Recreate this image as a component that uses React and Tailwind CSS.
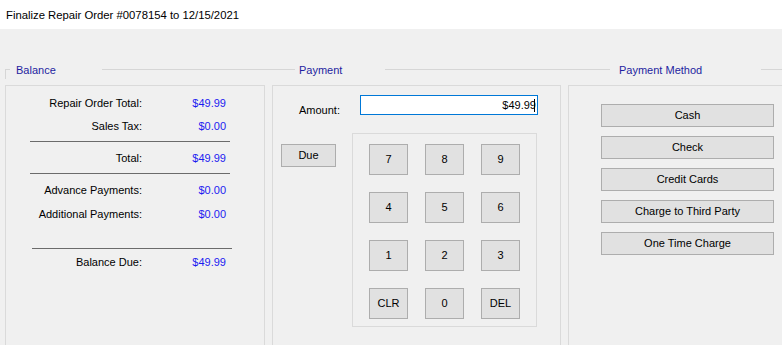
import React from "react";

const balanceRows = [
  { label: "Repair Order Total:", value: "$49.99" },
  { label: "Sales Tax:", value: "$0.00" },
];

const keys = ["7", "8", "9", "4", "5", "6", "1", "2", "3", "CLR", "0", "DEL"];

const methods = ["Cash", "Check", "Credit Cards", "Charge to Third Party", "One Time Charge"];

function Row({ label, value, className = "" }) {
  return (
    <div className={`flex leading-[16px] ${className}`}>
      <div className="w-[136px] text-right">{label}</div>
      <div className="w-[84px] text-right text-[#1c1cf0]">{value}</div>
    </div>
  );
}

function WinButton({ children, className = "" }) {
  return (
    <button
      className={`flex items-center justify-center bg-[#e1e1e1] border border-[#adadad] text-[11px] text-black leading-none ${className}`}
    >
      {children}
    </button>
  );
}

export default function App() {
  return (
    <div className="w-[782px] h-[345px] overflow-hidden bg-[#f0f0f0] text-[11px] text-black font-['Liberation_Sans',Arial,sans-serif]">
      {/* Title */}
      <div className="h-[29px] bg-white pl-[6px] pt-[8px] text-[11.3px] leading-[14px]">
        Finalize Repair Order #0078154 to 12/15/2021
      </div>

      {/* Group headers */}
      <div className="mt-[33px] h-[23px] flex items-start">
        <div className="ml-[5px] mt-[7px] w-[5px] h-[10px] border-l border-t border-[#d6d6d6]" />
        <div className="ml-[6px] w-[86px] mt-[1px] leading-[14px] text-[#1e1ea0]">Balance</div>
        <div className="w-[193px] mt-[7px] h-px bg-[#d6d6d6]" />
        <div className="ml-[4px] w-[86px] mt-[1px] leading-[14px] text-[#1e1ea0]">Payment</div>
        <div className="w-[225px] mt-[7px] h-px bg-[#d6d6d6]" />
        <div className="ml-[9px] w-[142px] mt-[1px] leading-[14px] text-[#1e1ea0]">Payment Method</div>
        <div className="flex-1 mt-[7px] h-px bg-[#d6d6d6]" />
      </div>

      <div className="flex items-start pl-[5px] gap-[7px]">
        {/* Balance */}
        <div className="w-[260px] h-[280px] shrink-0 border border-[#dadada] flex flex-col">
          <Row {...balanceRows[0]} className="mt-[9px]" />
          <Row {...balanceRows[1]} className="mt-[7px]" />
          <div className="mt-[7px] ml-[24px] w-[200px] h-px bg-[#6b6b6b]" />
          <Row label="Total:" value="$49.99" className="mt-[8px]" />
          <div className="mt-[7px] ml-[24px] w-[200px] h-px bg-[#6b6b6b]" />
          <Row label="Advance Payments:" value="$0.00" className="mt-[8px]" />
          <Row label="Additional Payments:" value="$0.00" className="mt-[8px]" />
          <div className="mt-[26px] ml-[26px] w-[200px] h-px bg-[#6b6b6b]" />
          <Row label="Balance Due:" value="$49.99" className="mt-[5px]" />
        </div>

        {/* Payment */}
        <div className="w-[289px] h-[280px] shrink-0 border border-[#dadada] flex flex-col">
          <div className="mt-[9px] h-[20px] flex items-start">
            <div className="ml-[26px] w-[61px] mt-[7px] leading-[16px]">Amount:</div>
            <div className="w-[178px] h-[20px] border border-[#0078d7] bg-white flex items-center justify-end pr-[2px]">
              <span className="leading-[16px]">$49.99</span>
              <span className="w-px h-[13px] bg-black -ml-[2px]" />
            </div>
          </div>
          <div className="mt-[18px] flex items-start">
            <WinButton className="ml-[8px] mt-[11px] w-[55px] h-[23px]">Due</WinButton>
            <div className="ml-[16px] w-[185px] border border-[#dadada] pt-[10px] px-[16px] pb-[7px] grid grid-cols-3 gap-[17px]">
              {keys.map((k) => (
                <WinButton key={k} className="w-[39px] h-[31px]">
                  {k}
                </WinButton>
              ))}
            </div>
          </div>
        </div>

        {/* Payment Method */}
        <div className="w-[230px] h-[280px] shrink-0 border border-[#dadada] pt-[18px] pl-[32px] flex flex-col gap-[9px]">
          {methods.map((m) => (
            <WinButton key={m} className="w-[173px] h-[23px]">
              {m}
            </WinButton>
          ))}
        </div>
      </div>
    </div>
  );
}
